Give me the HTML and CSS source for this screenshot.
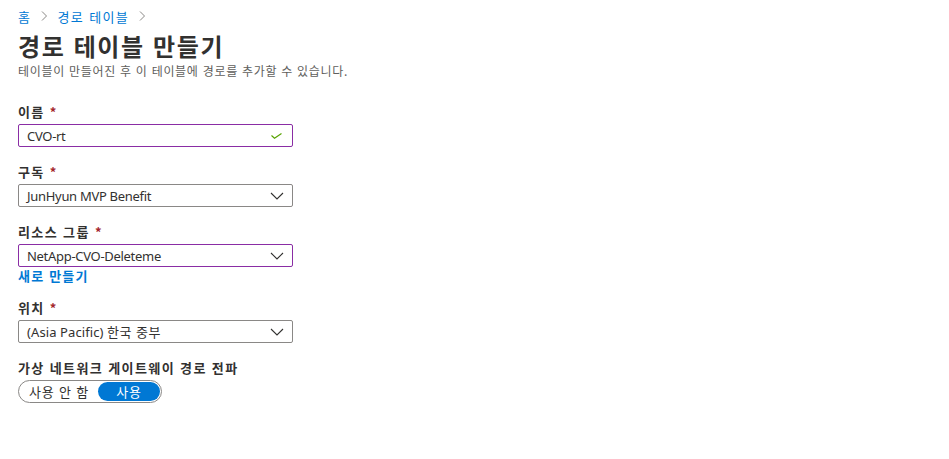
FILE: index.html
```html
<!DOCTYPE html>
<html lang="ko">
<head>
<meta charset="utf-8">
<link rel="stylesheet" href="styles.css">
</head>
<body>
<div class="page">
  <nav class="crumbs">
    <a class="crumb">홈</a>
    <svg class="sep" viewBox="0 0 8 12" width="8" height="12"><path d="M2 1.5 L6.5 6 L2 10.5" fill="none" stroke="#8a8886" stroke-width="1"/></svg>
    <a class="crumb">경로 테이블</a>
    <svg class="sep" viewBox="0 0 8 12" width="8" height="12"><path d="M2 1.5 L6.5 6 L2 10.5" fill="none" stroke="#8a8886" stroke-width="1"/></svg>
  </nav>
  <h1 class="title">경로 테이블 만들기</h1>
  <p class="subtitle">테이블이 만들어진 후 이 테이블에 경로를 추가할 수 있습니다.</p>

  <div class="field first">
    <div class="label">이름 <span class="req">*</span></div>
    <div class="box dirty">
      <span class="val">CVO-rt</span>
      <svg class="check" viewBox="0 0 11 6" width="11" height="6"><path d="M0.5 2.5 L3.5 5.2 L10.5 0.5" fill="none" stroke="#57a300" stroke-width="1.2"/></svg>
    </div>
  </div>

  <div class="field">
    <div class="label">구독 <span class="req">*</span></div>
    <div class="box">
      <span class="val">JunHyun MVP Benefit</span>
      <svg class="chev" viewBox="0 0 14 8" width="14" height="8"><path d="M1 1 L7 7 L13 1" fill="none" stroke="#323130" stroke-width="1.1"/></svg>
    </div>
  </div>

  <div class="field">
    <div class="label">리소스 그룹 <span class="req">*</span></div>
    <div class="box dirty">
      <span class="val">NetApp-CVO-Deleteme</span>
      <svg class="chev" viewBox="0 0 14 8" width="14" height="8"><path d="M1 1 L7 7 L13 1" fill="none" stroke="#323130" stroke-width="1.1"/></svg>
    </div>
    <a class="link">새로 만들기</a>
  </div>

  <div class="field">
    <div class="label">위치 <span class="req">*</span></div>
    <div class="box">
      <span class="val wide">(Asia Pacific) <span class="ko">한국 중부</span></span>
      <svg class="chev" viewBox="0 0 14 8" width="14" height="8"><path d="M1 1 L7 7 L13 1" fill="none" stroke="#323130" stroke-width="1.1"/></svg>
    </div>
  </div>

  <div class="field">
    <div class="label">가상 네트워크 게이트웨이 경로 전파</div>
    <div class="toggle">
      <span class="opt">사용 안 함</span>
      <span class="opt on">사용</span>
    </div>
  </div>
</div>
</body>
</html>
```

FILE: styles.css
```css
* { box-sizing: border-box; }
html, body { margin: 0; padding: 0; background: #fff; }
body {
  font-family: "Segoe UI", "Noto Sans", "Noto Sans CJK KR", sans-serif;
  color: #323130;
  font-size: 13px;
}
.page {
  padding: 6px 18px 0 18px;
  display: flex;
  flex-direction: column;
}
.crumbs {
  display: flex;
  align-items: center;
  gap: 9px;
  height: 20px;
  font-size: 13px;
  font-family: "Noto Sans CJK KR", sans-serif;
}
.crumb { color: #0078d4; letter-spacing: 1.4px; }
.sep { display: block; }
.title {
  margin: 6px 0 0 0;
  font-size: 24px;
  line-height: 28px;
  font-weight: 700;
  letter-spacing: 1.6px;
  color: #323130;
  font-family: "Noto Sans CJK KR", sans-serif;
}
.subtitle {
  margin: 3px 0 0 0;
  font-size: 12px;
  line-height: 16px;
  letter-spacing: 0.7px;
  color: #605e5c;
  font-family: "Noto Sans CJK KR", sans-serif;
}
.field {
  display: flex;
  flex-direction: column;
  margin-top: 16px;
}
.field.first { margin-top: 24px; }
.label {
  font-weight: 600;
  font-size: 13px;
  line-height: 18px;
  letter-spacing: 1.4px;
  margin-bottom: 3px;
  font-family: "Noto Sans CJK KR", sans-serif;
}
.req { color: #a4262c; }
.box {
  width: 275px;
  height: 23px;
  border: 1px solid #8a8886;
  border-radius: 2px;
  display: flex;
  align-items: center;
  justify-content: space-between;
  padding: 0 8px 0 8px;
}
.box.dirty { border-color: #8a2da5; }
.val {
  font-size: 13px;
  color: #323130;
  letter-spacing: -0.3px;
  font-family: "Noto Sans", "Noto Sans CJK KR", sans-serif;
}
.val.wide { letter-spacing: 0.1px; }
.ko { letter-spacing: 0.5px; font-family: "Noto Sans CJK KR", sans-serif; }
.check { margin-right: 2px; margin-top: 1px; }
.chev { margin-right: 0; }
.link {
  color: #0078d4;
  font-weight: 600;
  font-size: 13px;
  line-height: 18px;
  letter-spacing: 1.2px;
  margin-bottom: -2px;
  font-family: "Noto Sans CJK KR", sans-serif;
}
.toggle {
  width: 144px;
  height: 23px;
  border: 1px solid #8a8886;
  border-radius: 12px;
  display: flex;
  align-items: center;
  padding: 1px;
  font-family: "Noto Sans CJK KR", sans-serif;
}
.opt {
  height: 19px;
  display: flex;
  align-items: center;
  justify-content: center;
  font-size: 13px;
  letter-spacing: 0.8px;
  color: #323130;
}
.opt:first-child { width: 78px; }
.opt.on {
  width: 62px;
  background: #0078d4;
  color: #fff;
  border-radius: 10px;
}
```
